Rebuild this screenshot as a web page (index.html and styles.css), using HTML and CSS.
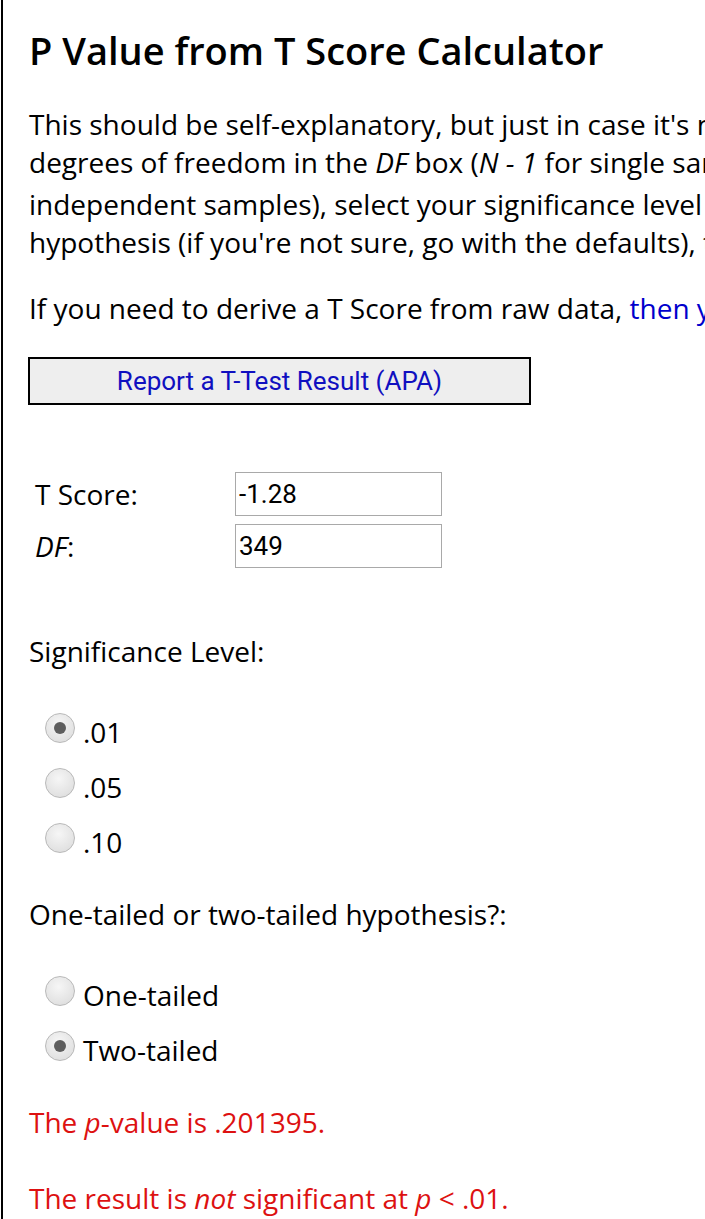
FILE: index.html
```html
<!DOCTYPE html>
<html lang="en">
<head>
<meta charset="utf-8">
<title>P Value from T Score Calculator</title>
<link rel="stylesheet" href="styles.css">
</head>
<body>
<div class="page">
  <h1 class="title">P Value from T Score Calculator</h1>
  <p class="intro">This should be self-explanatory, but just in case it's not: your t-score goes in the T Score box, you stick your<br>degrees of freedom in the <i>DF</i> box (<i>N - 1</i> for single sample and dependent pairs, (<i>N</i><sub>1</sub> - 1) + (<i>N</i><sub>2</sub> - 1) for<br>independent samples), select your significance level and whether you're testing a one or two-tailed<br>hypothesis (if you're not sure, go with the defaults), then press the button!</p>
  <p class="intro intro-last">If you need to derive a T Score from raw data, <a class="link" href="#">then you should use our t-test calculator</a>.</p>
  <div class="report-btn">Report a T-Test Result (APA)</div>
  <div class="fields">
    <div class="field"><span class="field-label">T Score:</span><span class="input">-1.28</span></div>
    <div class="field"><span class="field-label"><i>DF</i>:</span><span class="input">349</span></div>
  </div>
  <p class="label label-sig">Significance Level:</p>
  <div class="radios">
    <div class="radio-row"><span class="radio checked"></span>.01</div>
    <div class="radio-row"><span class="radio"></span>.05</div>
    <div class="radio-row"><span class="radio"></span>.10</div>
  </div>
  <p class="label">One-tailed or two-tailed hypothesis?:</p>
  <div class="radios">
    <div class="radio-row"><span class="radio"></span>One-tailed</div>
    <div class="radio-row"><span class="radio checked"></span>Two-tailed</div>
  </div>
  <p class="result">The <i>p</i>-value is .201395.</p>
  <p class="result result-sig">The result is <i>not</i> significant at <i>p</i> &lt; .01.</p>
</div>
</body>
</html>
```
FILE: styles.css
```css
html, body {
  margin: 0;
  padding: 0;
  overflow: hidden;
  background: #fff;
}
body {
  font-family: "Open Sans", "Liberation Sans", sans-serif;
  color: #000;
}
.page {
  border-left: 2px solid #000;
  margin-left: 1px;
  padding: 24px 0 40px 26px;
  min-height: 1219px;
  box-sizing: border-box;
  font-size: 28px;
}
.title {
  font-size: 38px;
  font-weight: 600;
  margin: 0 0 29px;
  line-height: 52px;
  white-space: nowrap;
}
.intro {
  margin: 0 0 28px;
  line-height: 38px;
  white-space: nowrap;
}
.intro-last { margin-bottom: 30px; }
sub { font-size: 18px; line-height: 1; vertical-align: -10px; }
.link { color: #0000cc; text-decoration: none; }
.report-btn {
  width: 499px;
  height: 44px;
  margin-left: -1px;
  border: 2px solid #000;
  background: #eeeeee;
  color: #1010c0;
  font-family: Roboto, "Liberation Sans", sans-serif;
  font-size: 26px;
  display: flex;
  align-items: center;
  justify-content: center;
}
.fields {
  margin-top: 67px;
  display: flex;
  flex-direction: column;
  gap: 8px;
  padding-left: 6px;
}
.field {
  display: flex;
  align-items: center;
}
.field-label { width: 200px; }
.input {
  width: 202px;
  height: 42px;
  border: 1px solid #a9a9a9;
  padding-left: 3px;
  font-family: Roboto, "Liberation Sans", sans-serif;
  font-size: 26px;
  display: flex;
  align-items: center;
}
.label { margin: 34px 0 0; line-height: 38px; }
.label-sig { margin-top: 64px; }
.radios {
  margin-top: 43px;
  padding-left: 16px;
  display: flex;
  flex-direction: column;
  gap: 17px;
}
.radio-row {
  display: flex;
  align-items: flex-end;
  height: 38px;
  line-height: 38px;
}
.radio {
  width: 30px;
  height: 30px;
  border-radius: 50%;
  border: 1px solid #b9b9b9;
  background: radial-gradient(circle at 45% 35%, #f6f6f6 0%, #e2e2e2 70%, #d6d6d6 100%);
  box-sizing: border-box;
  margin-right: 8px;
  align-self: flex-start;
  position: relative;
}
.radio.checked::after {
  content: "";
  position: absolute;
  left: 8px;
  top: 8px;
  width: 12px;
  height: 12px;
  border-radius: 50%;
  background: #5e5e5e;
}
.result {
  color: #dd1111;
  margin: 34px 0 0;
  line-height: 38px;
}
.result-sig { margin-top: 38px; }
```
